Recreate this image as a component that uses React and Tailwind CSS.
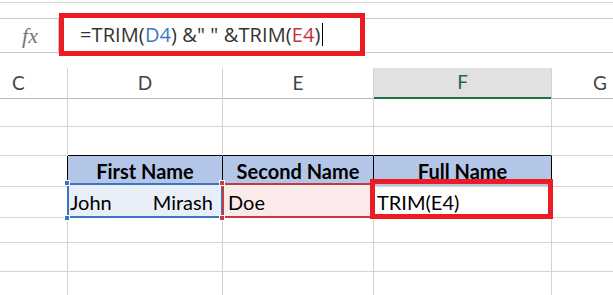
const grid = "border-[#d4d4d4]";

const Handle = ({ className, color }) => (
  <span
    className={`absolute w-[6px] h-[6px] border border-white ${color} ${className}`}
  />
);

export default function App() {
  const rows = [0, 1, 2, 3, 4, 5, 6];

  return (
    <div className="w-[613px] h-[295px] overflow-hidden bg-white font-['Lato',sans-serif] text-black">
      {/* top strip */}
      <div className={`h-[3px] border-b ${grid}`} />

      {/* Formula bar */}
      <div className="flex mt-[10px] h-[43px]">
        <div className="w-[59px] mt-[5px] h-[35px] border-y border-r border-[#c8c8c8] flex items-center justify-center pl-[2px]">
          <span className="font-['Liberation_Serif',serif] italic text-[22px] text-[#767676]">
            fx
          </span>
        </div>
        <div className="w-[306px] h-[43px] border-[5px] border-[#ed1c24] flex items-center pl-[16px]">
          <span className="font-['Open_Sans',sans-serif] text-[20px] text-[#333] whitespace-pre tracking-[0.1px]">
            =TRIM(<span className="text-[#3c78c8]">D4</span>) &amp;" " &amp;TRIM(
            <span className="text-[#c8323a]">E4</span>)
          </span>
          <span className="w-[1px] h-[23px] bg-black ml-[2px]" />
        </div>
        <div className="flex-1 mt-[5px] h-[35px] border-y border-[#c8c8c8]" />
      </div>

      {/* Column headers */}
      <div className="mt-[12px] grid grid-cols-[68px_155px_151px_178px_1fr] h-[30px] text-[19px] text-[#444]">
        <div className={`border-r border-b border-b-[#bdbdbd] ${grid} flex items-center pl-[12px]`}>C</div>
        <div className={`border-r border-b border-b-[#bdbdbd] ${grid} flex items-center justify-center`}>D</div>
        <div className={`border-r border-b border-b-[#bdbdbd] ${grid} flex items-center justify-center`}>E</div>
        <div className={`border-r ${grid} bg-[#e1e1e1] border-b-2 border-b-[#217346] flex items-center justify-center text-[#1f6b3d]`}>F</div>
        <div className="border-b border-b-[#bdbdbd] flex items-center pl-[41px]">G</div>
      </div>

      {/* Rows */}
      {rows.map((r) => {
        if (r === 2) {
          return (
            <div key={r} className="grid grid-cols-[68px_155px_151px_178px_1fr] h-[29px] text-[20px] font-bold">
              <div className={`border-b border-r border-r-black ${grid}`} />
              <div className={`border-b border-r border-r-black ${grid} bg-[#b4c6e7] flex items-center justify-center`}>First Name</div>
              <div className={`border-b border-r border-r-black ${grid} bg-[#b4c6e7] flex items-center justify-center`}>Second Name</div>
              <div className={`border-b border-r border-r-black ${grid} bg-[#b4c6e7] flex items-center justify-center`}>Full Name</div>
              <div className={`border-b ${grid}`} />
            </div>
          );
        }

        if (r === 3) {
          return (
            <div key={r} className="grid grid-cols-[68px_155px_151px_178px_1fr] h-[29px] text-[20px]">
              <div className={`border-b border-r ${grid}`} />
              <div className={`relative border-b border-r ${grid} bg-[#e9eff9] flex items-center pl-[2px] pt-[2px]`}>
                <span className="whitespace-pre">John        Mirash</span>
                <span className="absolute -left-[1px] -top-[2px] -right-[1px] -bottom-[1px] border-2 border-[#3c73c5]" />
                <Handle color="bg-[#3c73c5]" className="-left-[4px] -top-[5px]" />
                <Handle color="bg-[#3c73c5]" className="-left-[4px] -bottom-[4px]" />
              </div>
              <div className={`relative border-b border-r ${grid} bg-[#fbeaea] flex items-center pl-[5px] pt-[2px]`}>
                <span>Doe</span>
                <span className="absolute -left-[1px] -top-[2px] -right-[1px] -bottom-[1px] border-2 border-[#c13b3f]" />
                <Handle color="bg-[#c13b3f]" className="-left-[4px] -top-[5px]" />
                <Handle color="bg-[#c13b3f]" className="-left-[4px] -bottom-[4px]" />
              </div>
              <div className={`relative border-b border-r ${grid} flex items-center pl-[3px] pt-[2px]`}>
                <span>TRIM(E4)</span>
                <span className="absolute -left-[4px] -top-[6px] -right-[2px] -bottom-[2px] border-[5px] border-[#ed1c24]" />
              </div>
              <div className={`border-b ${grid}`} />
            </div>
          );
        }

        return (
          <div key={r} className="grid grid-cols-[68px_155px_151px_178px_1fr] h-[29px]">
            <div className={`border-b border-r ${grid}`} />
            <div className={`border-b border-r ${grid} ${r === 1 ? "border-b-black" : ""}`} />
            <div className={`border-b border-r ${grid} ${r === 1 ? "border-b-black" : ""}`} />
            <div className={`border-b border-r ${grid} ${r === 1 ? "border-b-black" : ""}`} />
            <div className={`border-b ${grid}`} />
          </div>
        );
      })}
    </div>
  );
}
